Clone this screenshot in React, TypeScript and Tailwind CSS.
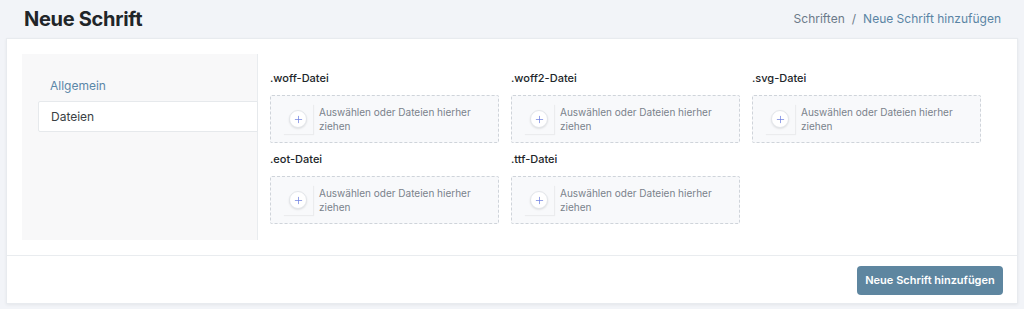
import { Plus } from 'lucide-react'

const FILE_TYPES = ['.woff', '.woff2', '.svg', '.eot', '.ttf']

function Dropzone({ label }: { label: string }) {
  return (
    <div>
      <div className="h-4 mb-[9px] text-[11px] leading-4 font-medium text-[#212529]">{label}-Datei</div>
      <div className="h-12 flex items-center pl-3 pr-4 gap-[6px] bg-[#f8f9fb] border border-dashed border-[#cfd4da] rounded-[2px]">
        <div className="w-[30px] h-[30px] shrink-0 flex items-center justify-center shadow-[1px_1px_1px_rgba(0,0,0,0.05)]">
          <span className="w-[18px] h-[18px] rounded-full bg-white border border-[#e3e6ea] shadow-[0_1px_2px_rgba(0,0,0,0.1)] flex items-center justify-center">
            <Plus className="w-[11px] h-[11px] text-[#6e7fe0]" strokeWidth={1.6} />
          </span>
        </div>
        <p className="text-[10px] leading-[14px] text-[#7a828b]">Auswählen oder Dateien hierher ziehen</p>
      </div>
    </div>
  )
}

export default function App() {
  return (
    <div className="min-h-[309px] bg-[#f2f4f8] font-['Inter',sans-serif] pb-[6px]">
      <header className="h-[38px] flex items-center justify-between pl-6 pr-[23px]">
        <h1 className="text-[20px] font-bold text-[#212529] tracking-[-0.3px]">Neue Schrift</h1>
        <nav className="text-[12px] flex gap-[7px]">
          <span className="text-[#6c7a89]">Schriften</span>
          <span className="text-[#6c7a89]">/</span>
          <span className="text-[#5a84a4]">Neue Schrift hinzufügen</span>
        </nav>
      </header>

      <div className="mx-[6px] bg-white border border-[#e8ebef] shadow-[0_1px_3px_rgba(0,0,0,0.06)]">
        <div className="p-[15px]">
          <div className="flex">
            <aside className="w-[236px] shrink-0 bg-[#f8f8f9] border-r border-[#e9ecef] pt-4 pl-4">
              <div className="h-[31px] flex items-center pl-3 text-[12px] text-[#5b87a8]">Allgemein</div>
              <div className="h-[31px] flex items-center pl-3 -mr-px bg-white border border-[#e6e9ec] rounded-l-[2px] text-[12px] text-[#3a3f44]">
                Dateien
              </div>
            </aside>
            <section className="pl-3 pt-4 pb-4">
              <div className="grid grid-cols-[229px_229px_229px] gap-x-3 gap-y-2">
                {FILE_TYPES.map((t) => (
                  <Dropzone key={t} label={t} />
                ))}
              </div>
            </section>
          </div>
        </div>
        <div className="border-t border-[#e9ecef] flex justify-end pt-[10px] pb-[8px] pr-[14px]">
          <button
            type="button"
            className="h-[29px] w-[146px] rounded-[4px] bg-[#5e86a0] text-white text-[11px] font-semibold"
          >
            Neue Schrift hinzufügen
          </button>
        </div>
      </div>
    </div>
  )
}
